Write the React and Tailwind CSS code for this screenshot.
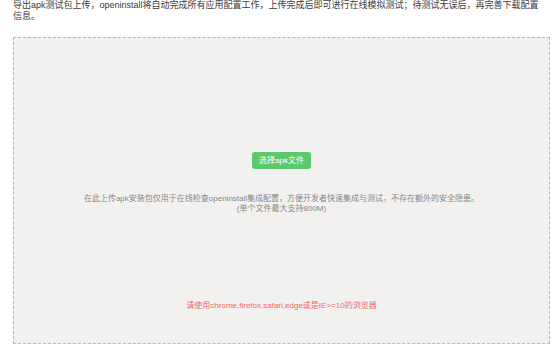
export default function App() {
  return (
    <div
      className="w-[553px] h-[346px] bg-white overflow-hidden"
      style={{ fontFamily: '"Liberation Sans", "Noto Sans CJK SC", sans-serif' }}
    >
      <p className="ml-[13px] w-[527px] text-[9px] leading-[11px] text-[#3a3a3a]">
        导出apk测试包上传，openinstall将自动完成所有应用配置工作，上传完成后即可进行在线模拟测试；待测试无误后，再完善下载配置信息。
      </p>
      <div className="mt-[15px] ml-[13px] w-[537px] h-[307px] border border-dashed border-[#8cc6ee] bg-[#f2f1ef] flex flex-col items-center pt-[114px]">
        <button className="h-[17px] w-[59px] rounded-[3px] bg-[#5bc96b] text-white text-[8px] leading-[17px]">
          选择apk文件
        </button>
        <div className="mt-[25px] text-center text-[8px] leading-[10px] text-[#888]">
          <p>在此上传apk安装包仅用于在线检查openinstall集成配置，方便开发者快速集成与测试，不存在额外的安全隐患。</p>
          <p>(单个文件最大支持800M)</p>
        </div>
        <p className="mt-[87px] text-[8px] leading-[10px] text-[#f06a6a]">
          请使用chrome,firefox,safari,edge或是IE&gt;=10的浏览器
        </p>
      </div>
    </div>
  );
}
